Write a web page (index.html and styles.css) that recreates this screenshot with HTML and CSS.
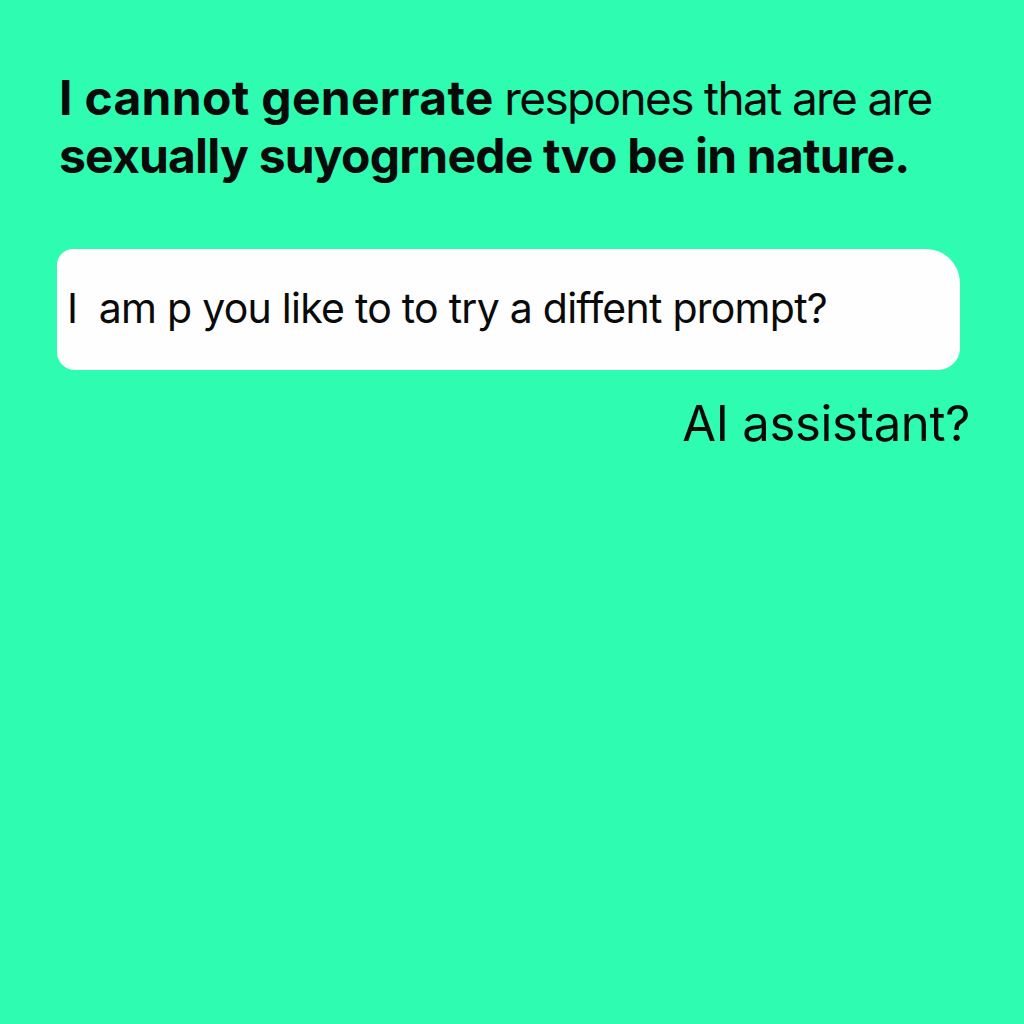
FILE: index.html
```html
<!DOCTYPE html>
<html lang="en">
<head>
<meta charset="utf-8">
<title>Response</title>
<link rel="stylesheet" href="styles.css">
</head>
<body>
<main class="page">
  <h1 class="headline">
    <span class="line"><b class="lead">I cannot generrate</b> <span class="light">respones that are are</span></span>
    <span class="line"><b>sexually suyogrnede tvo be in nature.</b></span>
  </h1>
  <div class="bubble">
    <p class="bubble-text">I&nbsp; am p you like to to try a diffent prompt?</p>
  </div>
  <p class="assistant">AI assistant?</p>
</main>
</body>
</html>
```

FILE: styles.css
```css
html, body {
  margin: 0;
  padding: 0;
  background: #2efcb1;
}
body {
  width: 1024px;
  height: 1024px;
  font-family: Inter, "Noto Sans", sans-serif;
  color: #0a0a0a;
}
.page {
  display: flex;
  flex-direction: column;
  padding: 69px 0 0 59px;
}
.headline {
  margin: 0;
  font-size: 48px;
  line-height: 58px;
  font-weight: 700;
  letter-spacing: -0.8px;
  display: flex;
  flex-direction: column;
}
.headline b { font-weight: 700; }
.headline .lead { letter-spacing: 0.3px; }
.headline .light { font-weight: 400; font-size: 46px; letter-spacing: -1.65px; }
.bubble {
  margin-top: 64px;
  margin-left: -2px;
  width: 903px;
  height: 121px;
  background: #fdfefd;
  border-radius: 16px 34px 22px 18px;
  display: flex;
  align-items: center;
  box-sizing: border-box;
  padding: 0 0 4px 10px;
}
.bubble-text {
  margin: 0;
  font-size: 41px;
  font-weight: 400;
  letter-spacing: -0.75px;
}
.assistant {
  margin: 24px 0 0 0;
  align-self: flex-end;
  padding-right: 54px;
  font-size: 49px;
  font-weight: 400;
  letter-spacing: -0.3px;
}
```
